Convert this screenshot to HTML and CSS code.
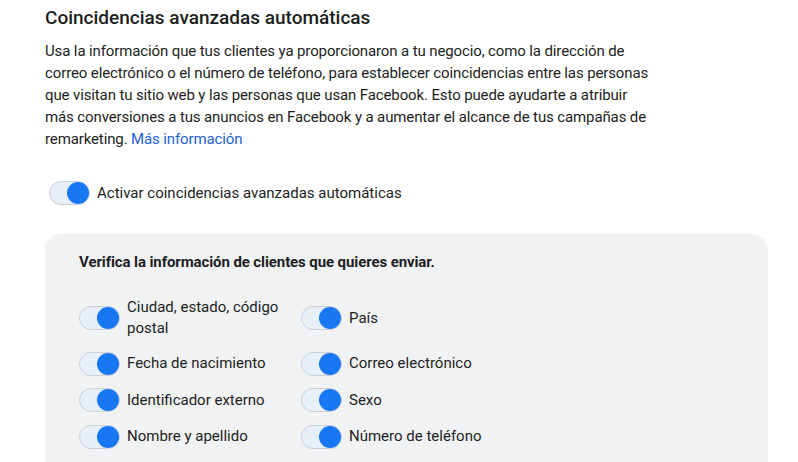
FILE: index.html
```html
<!DOCTYPE html>
<html>

<head>
    <meta charset="utf-8">
    <link rel="stylesheet" href="styles.css">
</head>

<body>
    <section class="matching">
        <h2 class="matching-title">Coincidencias avanzadas automáticas</h2>
        <p class="matching-desc">
            Usa la información que tus clientes ya proporcionaron a tu negocio, como la dirección de
            correo electrónico o el número de teléfono, para establecer coincidencias entre las personas
            que visitan tu sitio web y las personas que usan Facebook. Esto puede ayudarte a atribuir
            más conversiones a tus anuncios en Facebook y a aumentar el alcance de tus campañas de
            remarketing. <a href="#" class="link">Más información</a>
        </p>

        <label class="switch-row main-switch">
            <span class="switch on"><span class="knob"></span></span>
            <span class="switch-label">Activar coincidencias avanzadas automáticas</span>
        </label>

        <div class="fields-box">
            <h3 class="fields-title">Verifica la información de clientes que quieres enviar.</h3>
            <div class="fields-grid">
                <label class="switch-row">
                    <span class="switch on"><span class="knob"></span></span>
                    <span class="switch-label">Ciudad, estado, código postal</span>
                </label>
                <label class="switch-row">
                    <span class="switch on"><span class="knob"></span></span>
                    <span class="switch-label">País</span>
                </label>
                <label class="switch-row">
                    <span class="switch on"><span class="knob"></span></span>
                    <span class="switch-label">Fecha de nacimiento</span>
                </label>
                <label class="switch-row">
                    <span class="switch on"><span class="knob"></span></span>
                    <span class="switch-label">Correo electrónico</span>
                </label>
                <label class="switch-row">
                    <span class="switch on"><span class="knob"></span></span>
                    <span class="switch-label">Identificador externo</span>
                </label>
                <label class="switch-row">
                    <span class="switch on"><span class="knob"></span></span>
                    <span class="switch-label">Sexo</span>
                </label>
                <label class="switch-row">
                    <span class="switch on"><span class="knob"></span></span>
                    <span class="switch-label">Nombre y apellido</span>
                </label>
                <label class="switch-row">
                    <span class="switch on"><span class="knob"></span></span>
                    <span class="switch-label">Número de teléfono</span>
                </label>
            </div>
        </div>
    </section>
</body>

</html>
```

FILE: styles.css
```css
/* automatic advanced matching settings */

body {
    margin: 0;
    font-family: Roboto, "Liberation Sans", sans-serif;
    color: #1c1e21;
    background: #fff;
}

.matching {
    padding: 6px 30px 0 45px;
}

.matching-title {
    margin: 0;
    font-size: 19px;
    line-height: 24px;
    font-weight: 500;
}

.matching-desc {
    margin: 10px 0 0;
    font-size: 15px;
    line-height: 22px;
    letter-spacing: -0.12px;
    max-width: 607px;
}

.link {
    color: #1d5fcf;
    text-decoration: none;
}

/* switch rows */

.switch-row {
    display: flex;
    align-items: center;
    gap: 7px;
    font-size: 15px;
    line-height: 21px;
}

.main-switch {
    margin: 31px 0 0 4px;
}

.switch {
    position: relative;
    flex: none;
    width: 39px;
    height: 22px;
    border: 1px solid #ccd0d5;
    border-radius: 12px;
    background: #e7eff9;
}

.knob {
    position: absolute;
    top: 0;
    right: 0;
    width: 22px;
    height: 22px;
    border-radius: 50%;
    background: #1877f2;
}

/* box with the field switches */

.fields-box {
    margin-top: 29px;
    background: #f1f2f4;
    border-radius: 16px 16px 0 0;
    padding: 18px 34px 30px;
}

.fields-title {
    margin: 0;
    font-size: 15px;
    line-height: 20px;
    font-weight: 700;
    letter-spacing: -0.1px;
}

.fields-grid {
    margin-top: 25px;
    display: grid;
    grid-template-columns: 200px 200px;
    column-gap: 22px;
    row-gap: 12.5px;
}
```
